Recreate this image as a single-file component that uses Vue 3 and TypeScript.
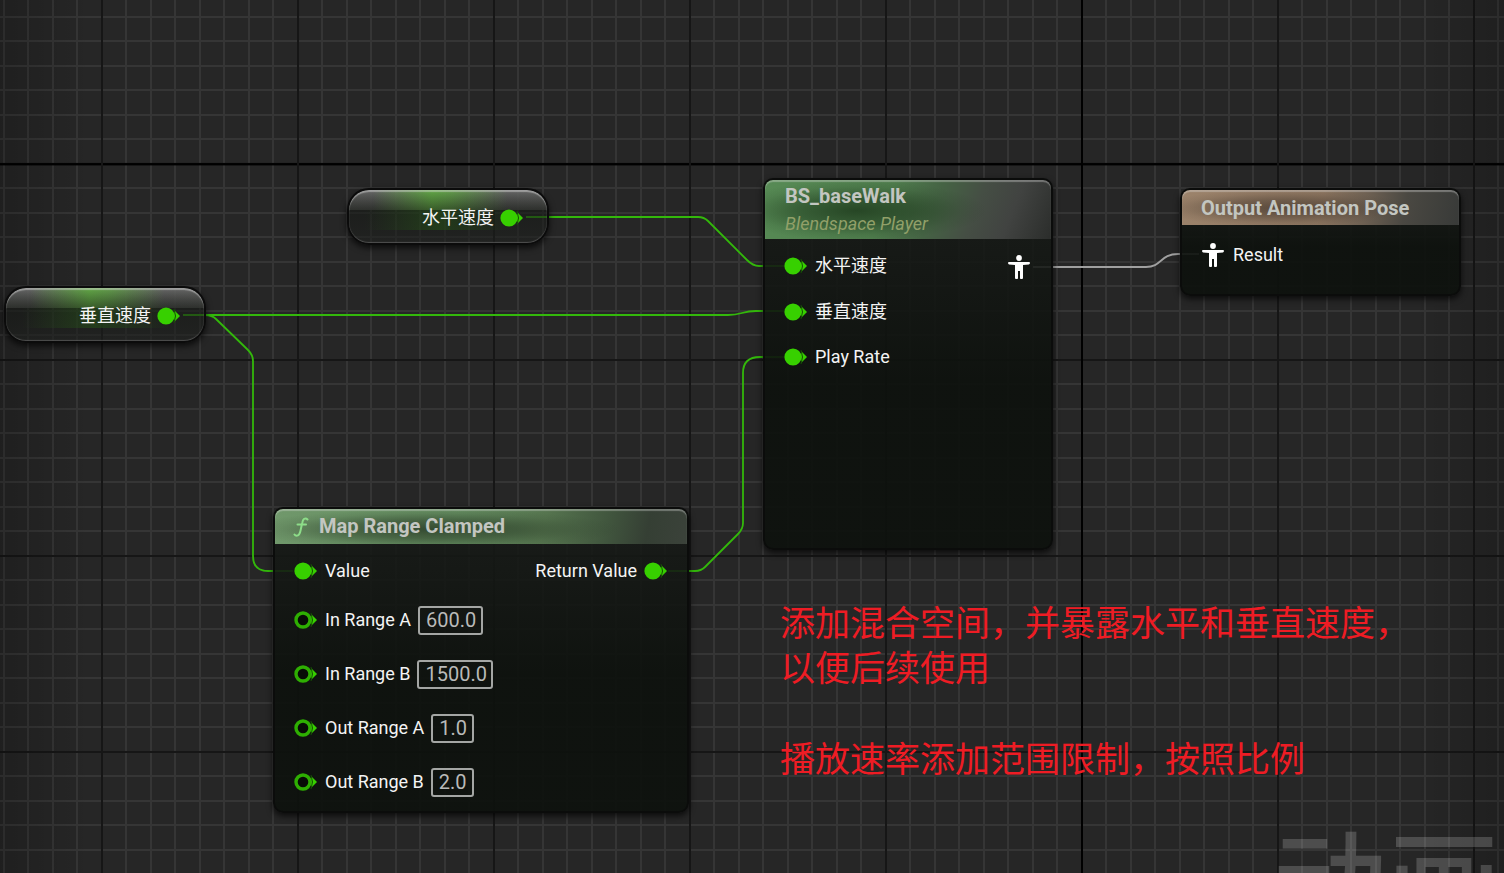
<script setup lang="ts">
import { reactive } from 'vue'

interface RangeField {
  id: string
  label: string
  value: string
}

const fields = reactive<RangeField[]>([
  { id: 'in-range-a', label: 'In Range A', value: '600.0' },
  { id: 'in-range-b', label: 'In Range B', value: '1500.0' },
  { id: 'out-range-a', label: 'Out Range A', value: '1.0' },
  { id: 'out-range-b', label: 'Out Range B', value: '2.0' },
])

const blendInputs = ['水平速度', '垂直速度', 'Play Rate']

const fieldWidth = (value: string): string => `${21 + (value.length - 1) * 11}px`
</script>

<template>
  <main class="graph">
    <div class="vignette"></div>
    <div class="watermark" aria-hidden="true">动画</div>

    <svg class="wires" aria-hidden="true">
      <g class="wire">
        <path d="M526 217H698Q704 217 708 221L747 260Q753 266 759 266H784" />
        <path d="M183 315H728C742 315 742 311 756 311H784" />
        <path d="M205 315Q212 315 216 319L248 350Q253 355 253 361V556Q253 571 268 571H293" />
        <path d="M668 571H695Q701 571 705 567L738 534Q743 529 743 523V373Q743 357 760 357H784" />
      </g>
      <path class="wire pose-wire" d="M1033 267H1146C1162 267 1160 254 1178 254H1199" />
    </svg>

    <section class="variable horizontal">
      <span>水平速度</span>
      <svg class="pin" viewBox="0 0 24 18"><circle cx="9" cy="9" r="8.6" /><path d="M17 3L23 9L17 15Z" /><path class="gap" d="M17 2Q20 9 17 16" /></svg>
    </section>

    <section class="variable vertical">
      <span>垂直速度</span>
      <svg class="pin" viewBox="0 0 24 18"><circle cx="9" cy="9" r="8.6" /><path d="M17 3L23 9L17 15Z" /><path class="gap" d="M17 2Q20 9 17 16" /></svg>
    </section>

    <section class="node blend">
      <header class="head green">
        <h2>BS_baseWalk</h2>
        <p>Blendspace Player</p>
      </header>
      <div class="body split">
        <ul class="pins">
          <li v-for="name in blendInputs" :key="name">
            <svg class="pin" viewBox="0 0 24 18"><circle cx="9" cy="9" r="8.6" /><path d="M17 3L23 9L17 15Z" /><path class="gap" d="M17 2Q20 9 17 16" /></svg>
            <span>{{ name }}</span>
          </li>
        </ul>
        <svg class="pose out" viewBox="0 0 22 24"><circle cx="11" cy="3" r="2.9" /><path d="M1 7H21Q22 7 22 8T21 9.400L15 10V23Q15 24 14 24H12.700Q12 24 12 23V16H10V23Q10 24 9.300 24H8Q7 24 7 23V10L1 9.400Q0 9 0 8T1 7Z" /></svg>
      </div>
    </section>

    <section class="node output">
      <header class="head tan">
        <h2>Output Animation Pose</h2>
      </header>
      <div class="body result">
        <svg class="pose" viewBox="0 0 22 24"><circle cx="11" cy="3" r="2.9" /><path d="M1 7H21Q22 7 22 8T21 9.400L15 10V23Q15 24 14 24H12.700Q12 24 12 23V16H10V23Q10 24 9.300 24H8Q7 24 7 23V10L1 9.400Q0 9 0 8T1 7Z" /></svg>
        <span>Result</span>
      </div>
    </section>

    <section class="node map">
      <header class="head sage">
        <svg class="fn" viewBox="0 0 16 20" aria-hidden="true"><path d="M14.500 2.500Q13 0.800 11.200 1.800Q9.800 2.800 9.200 6L7.300 14.500Q6.500 18 4.300 18.600Q2.500 19 1.500 17.500M4.500 7.500H13" /></svg>
        <h2>Map Range Clamped</h2>
      </header>
      <div class="body">
        <div class="row first">
          <svg class="pin" viewBox="0 0 24 18"><circle cx="9" cy="9" r="8.6" /><path d="M17 3L23 9L17 15Z" /><path class="gap" d="M17 2Q20 9 17 16" /></svg>
          <span>Value</span>
          <span class="return">Return Value</span>
          <svg class="pin" viewBox="0 0 24 18"><circle cx="9" cy="9" r="8.6" /><path d="M17 3L23 9L17 15Z" /><path class="gap" d="M17 2Q20 9 17 16" /></svg>
        </div>
        <div v-for="f in fields" :key="f.id" class="row">
          <svg class="pin hollow" viewBox="0 0 24 18"><path d="M17 3L23 9L17 15Z" /><circle cx="9" cy="9" r="7" /><path class="gap" d="M17 2Q20 9 17 16" /></svg>
          <label :for="f.id">{{ f.label }}</label>
          <input :id="f.id" v-model="f.value" type="text" :style="{ width: fieldWidth(f.value) }" />
        </div>
      </div>
    </section>

    <div class="note">
      <p>添加混合空间，并暴露水平和垂直速度，</p>
      <p>以便后续使用</p>
      <p class="spaced">播放速率添加范围限制，按照比例</p>
    </div>
  </main>
</template>

<style>
body {
  margin: 0;
  background: #262626;
}
</style>

<style scoped>
.graph {
  position: relative;
  min-height: 100vh;
  overflow: hidden;
  color: #f4f4f4;
  font: 18px/24px Roboto, 'Noto Sans CJK SC', sans-serif;
  background-color: #262626;
  background-image:
    linear-gradient(90deg, #000 2px, transparent 2px),
    linear-gradient(90deg, #161616 2px, transparent 2px),
    linear-gradient(#000 2px, transparent 2px),
    linear-gradient(#161616 2px, transparent 2px),
    linear-gradient(90deg, #353535 2px, transparent 2px, transparent 24px, #353535 24px, #353535 26px, transparent 26px),
    linear-gradient(#353535 2px, transparent 2px, transparent 24px, #353535 24px, #353535 26px, transparent 26px);
  background-size: 4000px 100%, 196px 100%, 100% 4000px, 100% 196px, 49px 100%, 100% 49px;
  background-position: 1081px 0, 101px 0, 0 163px, 0 163px, 3px 0, 0 16px;
}

.vignette {
  position: absolute;
  inset: 0;
  background:
    linear-gradient(90deg, rgba(0, 0, 0, 0.18), transparent 90px),
    linear-gradient(270deg, rgba(0, 0, 0, 0.18), transparent 90px);
}

.watermark {
  position: absolute;
  right: 3px;
  top: 820px;
  color: rgba(255, 255, 255, 0.18);
  font: 500 114px/114px 'Noto Sans CJK SC', sans-serif;
}

.wires {
  position: absolute;
  inset: 0;
  width: 100%;
  height: 100%;
}

.wire {
  fill: none;
  stroke: #33b80b;
  stroke-width: 1.8;
}

.pose-wire {
  stroke: #a0a0a0;
}

.pin {
  flex: none;
  width: 24px;
  height: 18px;
  fill: #37d000;
}

.pin .gap {
  fill: none;
  stroke: #145003;
  stroke-width: 1;
}

.hollow circle {
  fill: #080c07;
  stroke: #2eae02;
  stroke-width: 3.4;
}

.variable {
  position: absolute;
  box-sizing: border-box;
  width: 202px;
  height: 57px;
  padding: 2px 23px 0 0;
  display: flex;
  align-items: center;
  justify-content: flex-end;
  gap: 6px;
  border: 2px solid #0b0b0b;
  border-radius: 22px;
  background:
    linear-gradient(rgba(0, 0, 0, 0), rgba(18, 22, 16, 0.5)) 0 0 / 100% 20px no-repeat,
    linear-gradient(90deg, transparent 12%, rgba(98, 178, 66, 0.85) 42%, rgba(98, 178, 66, 0.7) 52%, transparent 80%) 0 0 / 100% 20px no-repeat,
    linear-gradient(rgba(130, 130, 130, 0.75), rgba(105, 105, 105, 0.6)) 0 0 / 100% 20px no-repeat,
    linear-gradient(90deg, transparent 8%, rgba(38, 82, 24, 0.55) 45%, transparent 84%) 0 20px / 100% 20px no-repeat,
    linear-gradient(rgba(17, 20, 16, 0.6), rgba(30, 32, 30, 0.6));
  background-clip: padding-box;
  box-shadow:
    inset 0 2px 1px rgba(225, 225, 225, 0.45),
    inset 0 -1px 1px rgba(110, 110, 110, 0.6),
    0 3px 6px rgba(0, 0, 0, 0.7);
}

.horizontal {
  left: 347px;
  top: 188px;
}

.vertical {
  left: 4px;
  top: 286px;
}

.node {
  position: absolute;
  box-sizing: border-box;
  border: 2px solid #0b0c0b;
  border-radius: 10px;
  background: linear-gradient(rgba(24, 27, 24, 0.86), rgba(13, 17, 13, 0.92) 55%);
  box-shadow: 0 3px 6px rgba(0, 0, 0, 0.7);
}

.blend {
  left: 763px;
  top: 178px;
  width: 290px;
  height: 372px;
}

.output {
  left: 1180px;
  top: 188px;
  width: 281px;
  height: 108px;
}

.map {
  left: 273px;
  top: 507px;
  width: 416px;
  height: 306px;
}

.head {
  box-sizing: border-box;
  height: 35px;
  padding: 0 19px;
  border-radius: 8px 8px 0 0;
  box-shadow: inset 0 2px 1px rgba(230, 230, 230, 0.35);
  color: #c3c6c1;
}

.head h2,
.head p {
  margin: 0;
}

.head h2 {
  font: bold 20px/35px Roboto, sans-serif;
}

.green {
  height: 59px;
  padding: 0 20px;
  background:
    radial-gradient(ellipse 130px 30px at 32% 52%, rgba(28, 56, 27, 0.8), rgba(28, 56, 27, 0.5) 45%, rgba(28, 56, 27, 0.12) 80%, transparent),
    linear-gradient(112deg, #578b55, #4f7d4d 42%, #456344 58%, #454e44 72%, #414341 84%, #2b2d2b);
}

.green h2 {
  line-height: 33px;
}

.green p {
  color: #91a069;
  font: italic 18px/22px Roboto, sans-serif;
}

.tan {
  background:
    radial-gradient(ellipse 130px 18px at 36% 52%, rgba(61, 49, 39, 0.65), rgba(61, 49, 39, 0.4) 45%, rgba(61, 49, 39, 0.1) 80%, transparent),
    linear-gradient(100deg, #9c836b, #8b745f 50%, #6d6052 66%, #4a4842 80%, #383a38);
}

.tan h2 {
  line-height: 37px;
}

.sage {
  display: flex;
  align-items: center;
  gap: 10px;
  padding: 0 18px;
  background:
    radial-gradient(ellipse 190px 20px at 38% 58%, rgba(41, 59, 38, 0.8), rgba(41, 59, 38, 0.5) 45%, rgba(41, 59, 38, 0.12) 80%, transparent),
    linear-gradient(100deg, #70986b, #628a5e 45%, #56754f 65%, #41563e 80%, #353f34 90%, #3b423a);
}

.fn {
  width: 16px;
  height: 20px;
  fill: none;
  stroke: #8ddd89;
  stroke-width: 2;
  stroke-linecap: round;
}

.split {
  display: flex;
  justify-content: space-between;
  align-items: flex-start;
  padding: 4px 21px 0 19px;
}

.pins {
  margin: 0;
  padding: 0;
  list-style: none;
}

.pins li {
  display: flex;
  align-items: center;
  gap: 7px;
  height: 46px;
}

.pins li:last-child {
  height: 44px;
}

.pose {
  width: 22px;
  height: 24px;
  fill: #fff;
}

.out {
  margin-top: 12px;
}

.result {
  display: flex;
  align-items: center;
  gap: 9px;
  padding: 18px 20px;
}

.map .body {
  padding: 5px 19px 0;
}

.row {
  display: flex;
  align-items: center;
  gap: 7px;
  height: 54px;
}

.first {
  height: 44px;
}

.return {
  margin-left: auto;
}

.row input {
  box-sizing: border-box;
  height: 29px;
  padding: 0 0 0 6px;
  border: 2px solid #a4a6a4;
  border-radius: 3px;
  outline: 0;
  background: transparent;
  color: #b9bab9;
  font: 20px/25px Roboto, sans-serif;
}

.note {
  position: absolute;
  left: 780px;
  top: 598px;
  color: #ee1c24;
  font: 35px/45px 'Noto Sans CJK SC', sans-serif;
  white-space: nowrap;
}

.note p {
  margin: 0;
}

.note .spaced {
  margin-top: 46px;
}
</style>
